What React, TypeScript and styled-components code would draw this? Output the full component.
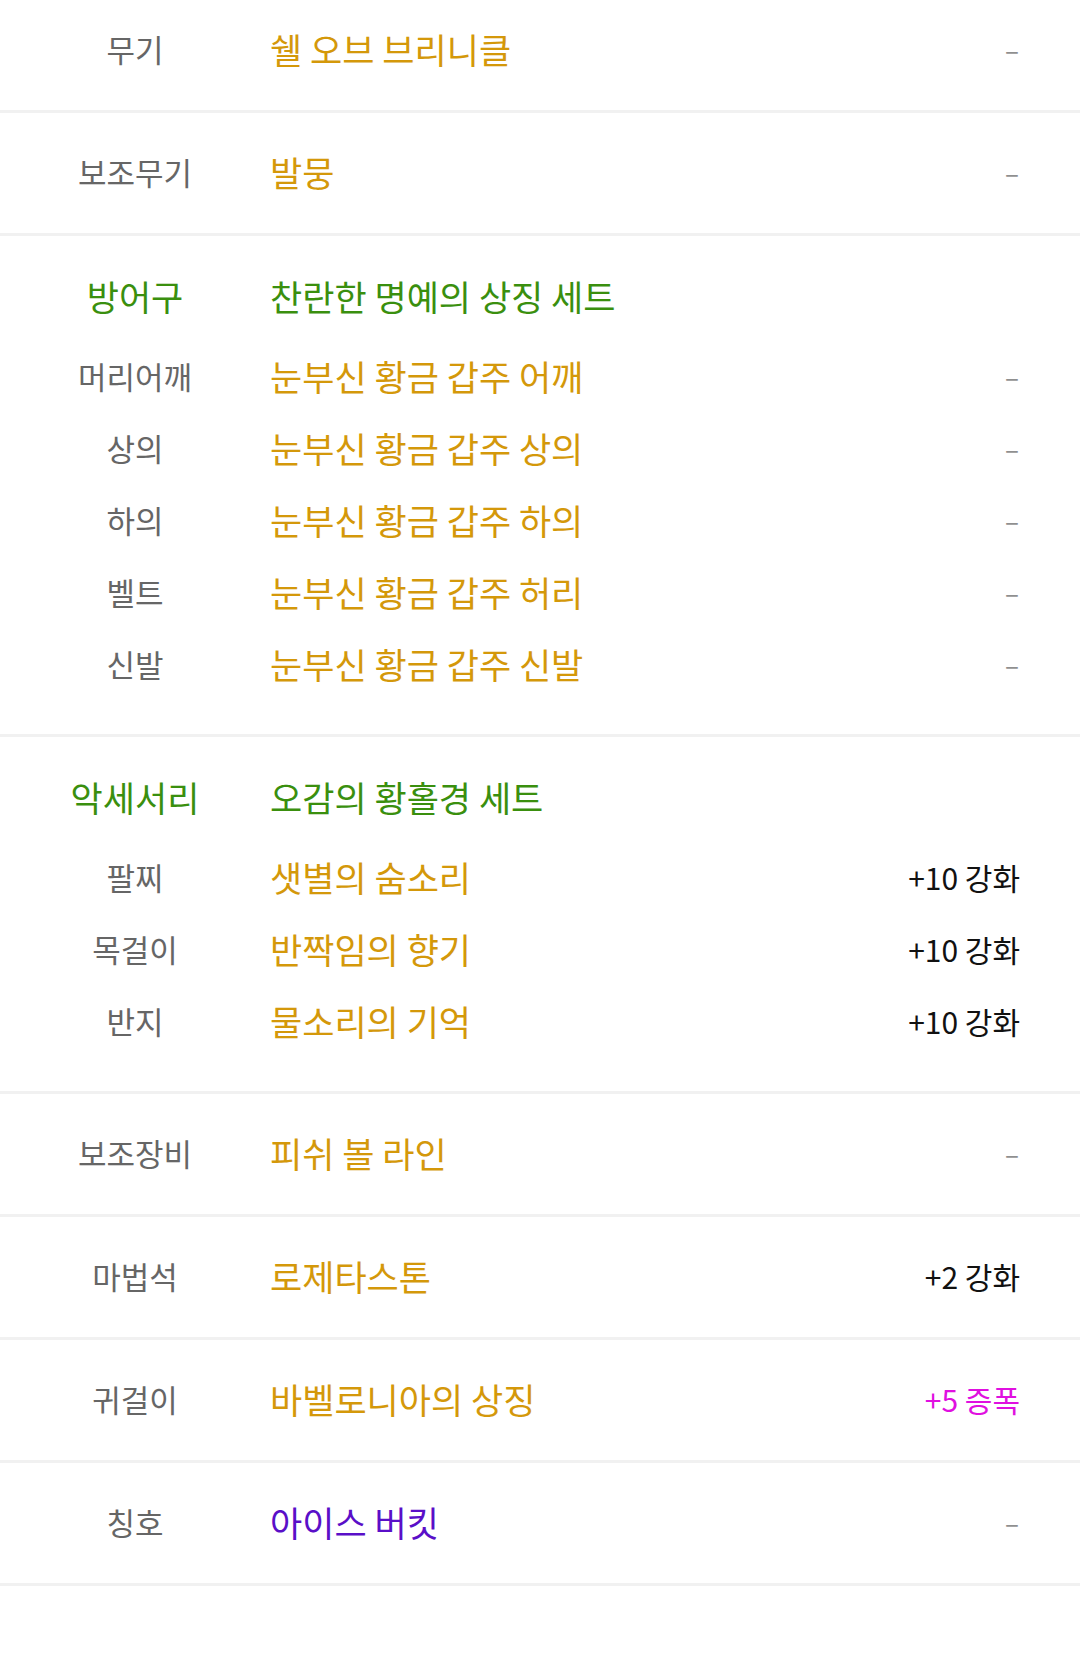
import React from "react";
import styled, { createGlobalStyle } from "styled-components";

const Global = createGlobalStyle`
  html, body { margin: 0; padding: 0; background: #ffffff; }
  body { font-family: "Noto Sans CJK KR", "Noto Sans", sans-serif; }
`;

type Tone = "gray" | "gold" | "green" | "purple" | "magenta" | "dark";

const colors: Record<Tone, string> = {
  gray: "#666666",
  gold: "#d4980a",
  green: "#3a8f0e",
  purple: "#5a0fc8",
  magenta: "#e010e0",
  dark: "#111111",
};

const Page = styled.div`
  width: 1080px;
  margin-top: -10px;
  background: #fff;
`;

const Block = styled.div<{ $kind: "single" | "group" }>`
  display: flex;
  flex-direction: column;
  justify-content: center;
  border-bottom: 3px solid #f1f1f1;
  ${(p) => (p.$kind === "single" ? "height: 120px;" : "padding: 25px 0 33px;")}
`;

const Line = styled.div<{ $head?: boolean }>`
  display: flex;
  align-items: center;
  box-sizing: border-box;
  height: 72px;
  padding: 0 60px 3px 0;
  ${(p) => (p.$head ? "margin-bottom: 8px;" : "")}
`;

const Label = styled.div<{ $tone: Tone; $head?: boolean }>`
  width: 270px;
  flex: none;
  text-align: center;
  color: ${(p) => colors[p.$tone]};
  font-size: ${(p) => (p.$head ? 35 : 31)}px;
`;

const Value = styled.div<{ $tone: Tone }>`
  flex: 1;
  color: ${(p) => colors[p.$tone]};
  font-size: 35px;
  white-space: nowrap;
`;

const Extra = styled.div<{ $tone: Tone }>`
  color: ${(p) => colors[p.$tone]};
  font-size: 30px;
  text-align: right;
  white-space: nowrap;
`;

const Dash = styled.div`
  color: #8f8f8f;
  font-size: 26px;
  padding-right: 1px;
`;

type Item = { label: string; value: string; tone?: Tone; extra?: string; extraTone?: Tone };

const Row = ({ label, value, tone = "gold", extra, extraTone = "dark" }: Item) => (
  <Line>
    <Label $tone="gray">{label}</Label>
    <Value $tone={tone}>{value}</Value>
    {extra ? <Extra $tone={extraTone}>{extra}</Extra> : <Dash>–</Dash>}
  </Line>
);

const Group = ({ title, set, items }: { title: string; set: string; items: Item[] }) => (
  <Block $kind="group">
    <Line $head>
      <Label $tone="green" $head>
        {title}
      </Label>
      <Value $tone="green">{set}</Value>
    </Line>
    {items.map((it) => (
      <Row key={it.label} {...it} />
    ))}
  </Block>
);

const Single = (it: Item) => (
  <Block $kind="single">
    <Row {...it} />
  </Block>
);

export default function App() {
  return (
    <>
      <Global />
      <Page>
        <Single label="무기" value="쉘 오브 브리니클" />
        <Single label="보조무기" value="발뭉" />
        <Group
          title="방어구"
          set="찬란한 명예의 상징 세트"
          items={[
            { label: "머리어깨", value: "눈부신 황금 갑주 어깨" },
            { label: "상의", value: "눈부신 황금 갑주 상의" },
            { label: "하의", value: "눈부신 황금 갑주 하의" },
            { label: "벨트", value: "눈부신 황금 갑주 허리" },
            { label: "신발", value: "눈부신 황금 갑주 신발" },
          ]}
        />
        <Group
          title="악세서리"
          set="오감의 황홀경 세트"
          items={[
            { label: "팔찌", value: "샛별의 숨소리", extra: "+10 강화" },
            { label: "목걸이", value: "반짝임의 향기", extra: "+10 강화" },
            { label: "반지", value: "물소리의 기억", extra: "+10 강화" },
          ]}
        />
        <Single label="보조장비" value="피쉬 볼 라인" />
        <Single label="마법석" value="로제타스톤" extra="+2 강화" />
        <Single label="귀걸이" value="바벨로니아의 상징" extra="+5 증폭" extraTone="magenta" />
        <Single label="칭호" value="아이스 버킷" tone="purple" />
      </Page>
    </>
  );
}
